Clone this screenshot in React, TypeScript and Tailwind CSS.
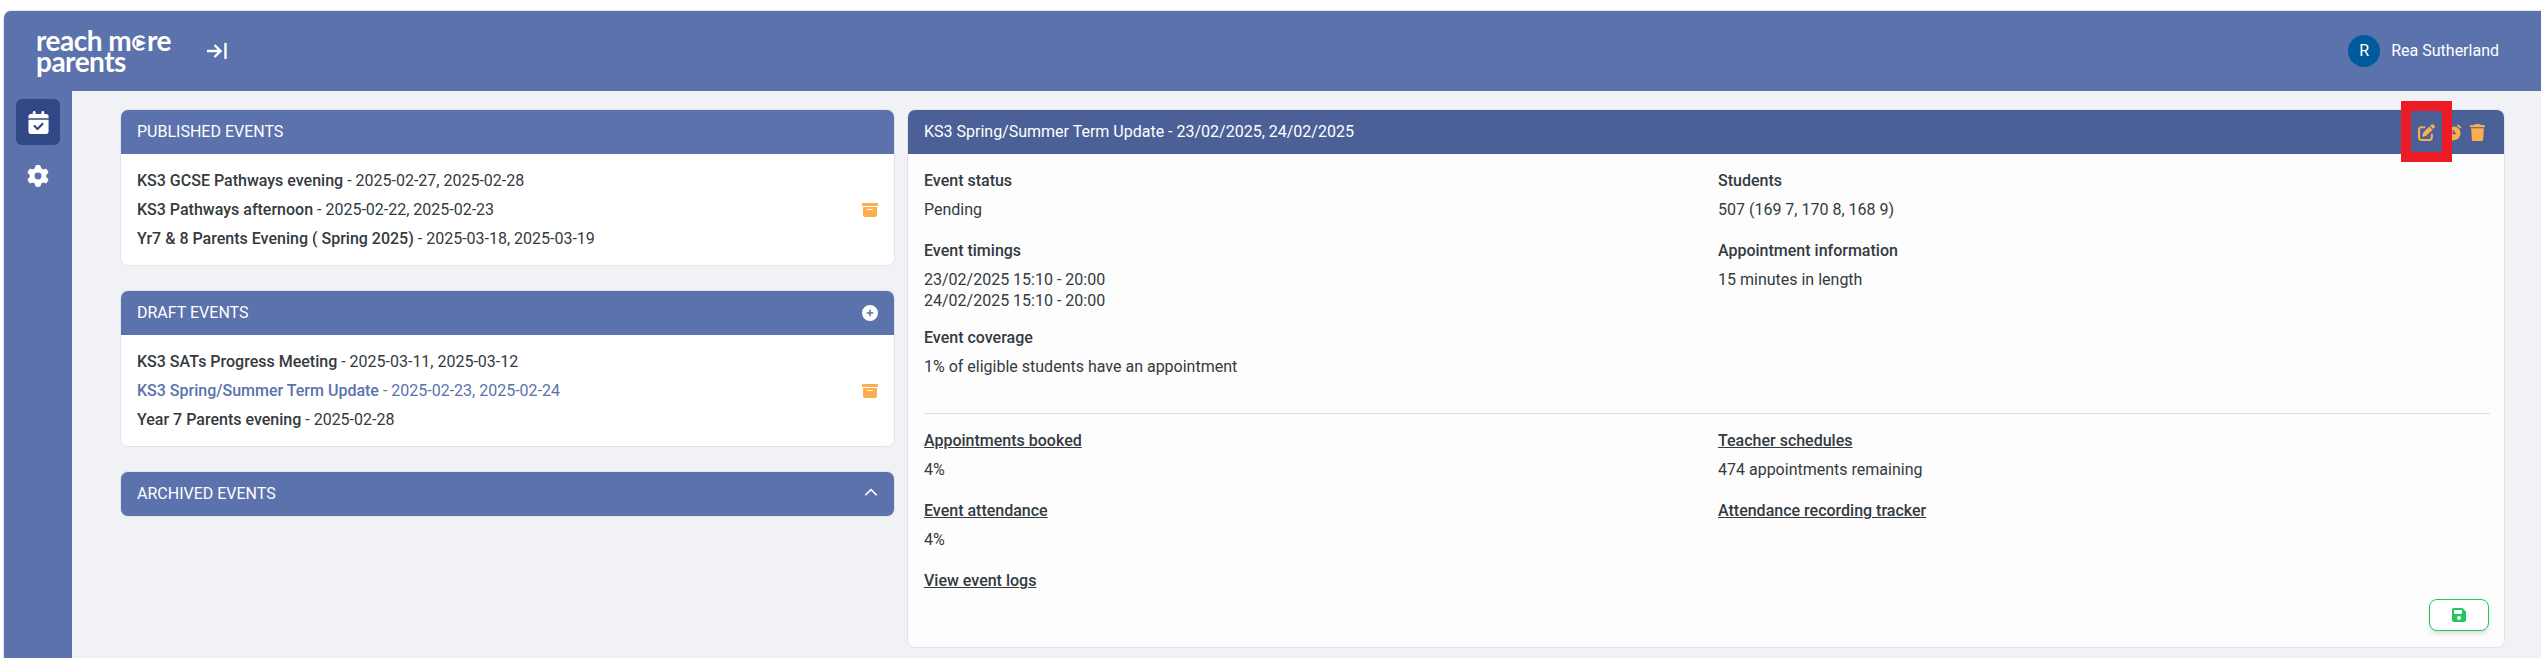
import { FaBoxArchive, FaCalendarCheck, FaChevronUp, FaCirclePlus, FaFloppyDisk, FaGear, FaPenToSquare, FaTrash } from "react-icons/fa6";
import { TbAlarmFilled } from "react-icons/tb";
import type { ReactNode } from "react";

const published = [
  { name: "KS3 GCSE Pathways evening", dates: "2025-02-27, 2025-02-28" },
  { name: "KS3 Pathways afternoon", dates: "2025-02-22, 2025-02-23", archive: true },
  { name: "Yr7 & 8 Parents Evening ( Spring 2025)", dates: "2025-03-18, 2025-03-19" },
];

const drafts = [
  { name: "KS3 SATs Progress Meeting", dates: "2025-03-11, 2025-03-12" },
  { name: "KS3 Spring/Summer Term Update", dates: "2025-02-23, 2025-02-24", archive: true, active: true },
  { name: "Year 7 Parents evening", dates: "2025-02-28" },
];

type Row = { name: string; dates: string; archive?: boolean; active?: boolean };

function Logo() {
  return (
    <div className="w-[135px] font-['Lato',sans-serif] text-[28px] leading-[21px] font-bold tracking-[-0.5px] whitespace-nowrap text-white">
      <div className="flex items-center">
        reach m
        <svg width="16" height="16" viewBox="0 0 16 16" className="mt-[5px]">
          <path d="M13.5 3 A6.7 6.7 0 1 0 13.5 13" fill="none" stroke="#fff" strokeWidth="2.4" />
          <path d="M5.5 3.5 L15.5 8 L5.5 12.5 Z" fill="#fff" />
        </svg>
        re
      </div>
      <div>parents</div>
    </div>
  );
}

function EventCard({ title, rows, action }: { title: string; rows: Row[]; action?: ReactNode }) {
  return (
    <div className="overflow-hidden rounded-lg border border-[#e2e5ea] bg-white">
      <div className="flex h-[44px] items-center justify-between bg-[#5b72ad] px-[16px] text-base text-white">
        {title}
        {action}
      </div>
      <div className="py-[12px] pl-[16px]">
        {rows.map((r) => (
          <div key={r.name} className={`flex h-[29px] items-center pr-[16px] text-base ${r.active ? "text-[#5b72ad]" : "text-[#343a40]"}`}>
            <span className="font-medium">{r.name}</span>
            <span className="whitespace-pre"> - {r.dates}</span>
            {r.archive && <FaBoxArchive className="ml-auto text-[#fbad50]" size={16} />}
          </div>
        ))}
      </div>
    </div>
  );
}

function Stat({ label, value, link, tight }: { label: string; value?: string; link?: boolean; tight?: boolean }) {
  return (
    <div className={tight ? "mb-[16px]" : "mb-[20px]"}>
      <div className={`h-[21px] text-base leading-[21px] font-medium ${link ? "underline" : ""}`}>{label}</div>
      {value && <div className="mt-[8px] text-base leading-[21px] whitespace-pre-line">{value}</div>}
    </div>
  );
}

export default function App() {
  return (
    <div className="h-[667px] bg-white pt-[10px] pr-[3px] pb-[9px] pl-[3px] font-['Roboto',sans-serif]">
      <div className="flex h-full flex-col overflow-hidden rounded-tl-lg border-t border-l border-[#e5e7eb] bg-[#5b72ad]">
        <header className="flex h-[80px] shrink-0 items-center pr-[42px] pl-[32px]">
          <Logo />
          <svg width="20" height="16" viewBox="0 0 20 16" className="ml-[36px]" fill="none" stroke="#fff" strokeWidth="2.4">
            <path d="M0 8 H13 M7.5 2 L13.5 8 L7.5 14" />
            <path d="M18.5 0 V16" />
          </svg>
          <div className="ml-auto flex items-center gap-[11px] text-base text-white">
            <div className="flex h-[32px] w-[32px] items-center justify-center rounded-full bg-[#015a9c]">R</div>
            Rea Sutherland
          </div>
        </header>
        <div className="flex min-h-0 flex-1">
          <nav className="flex w-[68px] shrink-0 flex-col items-center pt-[8px]">
            <div className="flex h-[46px] w-[44px] items-center justify-center rounded-md bg-[#304885]">
              <FaCalendarCheck className="text-white" size={23} />
            </div>
            <FaGear className="mt-[20px] text-white" size={22} />
          </nav>
          <main className="flex flex-1 gap-[12px] bg-[#f0f2f6] pt-[18px] pr-[36px] pl-[48px]">
            <div className="flex w-[775px] shrink-0 flex-col gap-[24px]">
              <EventCard title="PUBLISHED EVENTS" rows={published} />
              <EventCard title="DRAFT EVENTS" rows={drafts} action={<FaCirclePlus size={16} />} />
              <div className="flex h-[46px] items-center justify-between rounded-lg border border-[#e2e5ea] bg-[#5b72ad] px-[16px] text-base text-white">
                ARCHIVED EVENTS
                <FaChevronUp className="mb-[3px]" size={14} />
              </div>
            </div>
            <section className="relative flex h-[539px] flex-1 flex-col overflow-hidden rounded-lg border border-[#e2e5ea] bg-[#fdfdfd] text-[#343a40]">
              <div className="flex h-[44px] shrink-0 items-center bg-[#4a6096] pr-[18px] pl-[16px] text-base text-white">
                KS3 Spring/Summer Term Update - 23/02/2025, 24/02/2025
                <div className="ml-auto flex items-center text-[#fbad50]">
                  <FaPenToSquare size={17} />
                  <TbAlarmFilled className="ml-[8px]" size={21} />
                  <FaTrash className="ml-[5px]" size={17} />
                </div>
              </div>
              <div className="flex-1 pt-[16px] pr-[14px] pl-[16px]">
                <div className="grid grid-cols-2 gap-x-[22px]">
                  <div>
                    <Stat label="Event status" value="Pending" />
                    <Stat tight label="Event timings" value={"23/02/2025 15:10 - 20:00\n24/02/2025 15:10 - 20:00"} />
                    <Stat label="Event coverage" value="1% of eligible students have an appointment" />
                  </div>
                  <div>
                    <Stat label="Students" value="507 (169 7, 170 8, 168 9)" />
                    <Stat label="Appointment information" value="15 minutes in length" />
                  </div>
                </div>
                <div className="mt-[16px] mb-[16px] border-t border-[#dcdfe3]" />
                <div className="grid grid-cols-2 gap-x-[22px]">
                  <div>
                    <Stat link label="Appointments booked" value="4%" />
                    <Stat link label="Event attendance" value="4%" />
                    <Stat link label="View event logs" />
                  </div>
                  <div>
                    <Stat link label="Teacher schedules" value="474 appointments remaining" />
                    <Stat link label="Attendance recording tracker" />
                  </div>
                </div>
              </div>
              <button className="absolute right-[15px] bottom-[16px] flex h-[32px] w-[60px] items-center justify-center rounded-lg border border-[#22c55e] bg-white text-[#22c55e] shadow-md">
                <FaFloppyDisk size={16} />
              </button>
            </section>
          </main>
        </div>
      </div>
      {/* red annotation box from the original capture */}
      <div className="absolute top-[101px] left-[2401px] h-[61px] w-[51px] border-[10px] border-[#ed1c24]" />
    </div>
  );
}
